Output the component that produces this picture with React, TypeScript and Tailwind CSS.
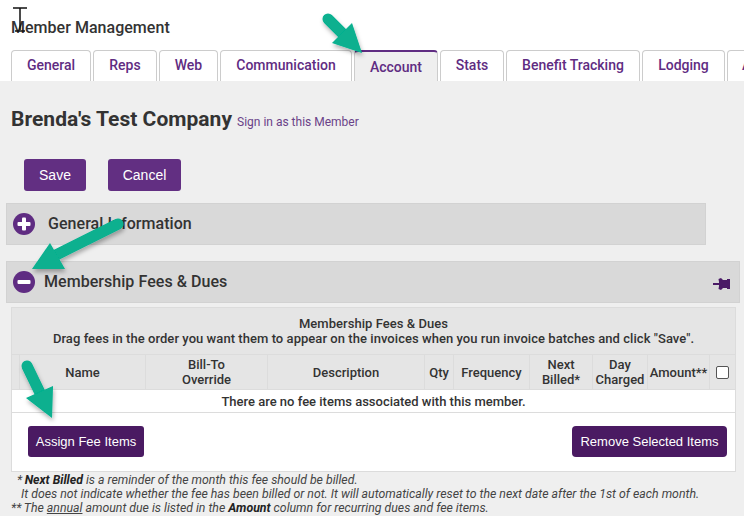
import React from "react";

const tabs = [
  { t: "General", w: "w-[80px]" },
  { t: "Reps", w: "w-[64px]" },
  { t: "Web", w: "w-[59px]" },
  { t: "Communication", w: "w-[132px]" },
  { t: "Account", w: "w-[84px]", active: true },
  { t: "Stats", w: "w-[64px]" },
  { t: "Benefit Tracking", w: "w-[134px]" },
  { t: "Lodging", w: "w-[83px]" },
];

const cols: React.ReactNode[] = [
  "",
  "Name",
  <>Bill-To<br />Override</>,
  "Description",
  "Qty",
  "Frequency",
  <>Next<br />Billed*</>,
  <>Day<br />Charged</>,
  "Amount**",
];

function Circle({ minus }: { minus?: boolean }) {
  return (
    <svg width="22" height="22" viewBox="0 0 22 22" className="shrink-0">
      <circle cx="11" cy="11" r="11" fill="#5f2c82" />
      <rect x="4.5" y="9" width="13" height="4" rx="1" fill="#fff" />
      {!minus && <rect x="9" y="4.5" width="4" height="13" rx="1" fill="#fff" />}
    </svg>
  );
}

export default function App() {
  return (
    <div className="relative w-[744px] h-[516px] overflow-hidden bg-white font-['Roboto',sans-serif]">
      <div className="h-[50px] pl-[11px] pt-[18px] text-[16px] leading-[19px] font-medium tracking-[0.03px] text-[#333]">
        Member Management
      </div>
      <div className="h-[31px] pl-[11px] flex gap-[2px] w-[800px]">
        {tabs.map((x) => (
          <div
            key={x.t}
            className={
              x.active
                ? `${x.w} shrink-0 rounded-t-[4px] border-t-2 border-x border-t-[#5f2c82] border-x-[#ccc] bg-[#efefef] text-[#5f2c82] text-[14px] font-medium text-center leading-[31px]`
                : `${x.w} shrink-0 rounded-t-[4px] border-t border-x border-[#ccc] bg-white text-[#5f2c82] text-[14px] font-medium text-center leading-[28px]`
            }
          >
            {x.t}
          </div>
        ))}
        <div className="w-[90px] shrink-0 rounded-t-[4px] border-t border-x border-[#ccc] bg-white text-[#5f2c82] text-[14px] font-medium pl-[14px] leading-[28px]">
          A
        </div>
      </div>
      <div className="h-[435px] bg-[#efefef]">
        <div className="pl-[11px] pt-[24px] h-[78px] flex items-baseline gap-[5px]">
          <span className="text-[21px] leading-[28px] font-bold tracking-[0.03px] text-[#333]">Brenda's Test Company</span>
          <span className="text-[12px] text-[#6a4288]">Sign in as this Member</span>
        </div>
        <div className="pl-[24px] flex gap-[22px] font-['Liberation_Sans',sans-serif] text-[14px] text-white">
          <div className="w-[62px] h-[32px] rounded-[3px] bg-[#622f82] flex items-center justify-center">Save</div>
          <div className="w-[73px] h-[32px] rounded-[3px] bg-[#622f82] flex items-center justify-center">Cancel</div>
        </div>
        <div className="ml-[6px] mt-[12px] w-[700px] h-[42px] bg-[#d9d9d9] border border-[#d2d2d2] flex items-center pl-[6px] gap-[13px] text-[16px] font-medium tracking-[0.05px] text-[#333]">
          <Circle />
          <span>General Information</span>
        </div>
        <div className="ml-[6px] mt-[16px] w-[734px] h-[42px] bg-[#d9d9d9] border border-[#d2d2d2] flex items-center pl-[6px] pr-[9px] gap-[9px] text-[16px] font-medium tracking-[0.05px] text-[#333]">
          <Circle minus />
          <span className="flex-1">Membership Fees &amp; Dues</span>
          <svg width="17" height="12" viewBox="0 0 17 12" className="mt-[4px]">
            <path d="M0 5 H6 V4 L5.5 1 L8 0 L10 2 H14 V1 H17 V11 H14 V10 H10 L8 12 L5.5 11 L6 8 V7 H0 Z" fill="#4a1a66" />
          </svg>
        </div>
        <div className="ml-[11px] mt-[4px] w-[725px] border border-[#dcdcdc] bg-white text-[13px] text-[#333] font-medium">
          <div className="h-[47px] bg-[#e5e5e5] border-b border-[#dcdcdc] text-center leading-[15px] pt-[8px] text-[13px] tracking-[0.05px]">
            <div>Membership Fees &amp; Dues</div>
            <div>Drag fees in the order you want them to appear on the invoices when you run invoice batches and click "Save".</div>
          </div>
          <div className="h-[34px] bg-[#e5e5e5] grid grid-cols-[8px_126px_122px_157px_29px_76px_63px_55px_62px_1fr] text-center leading-[15px] text-[13px]">
            {cols.map((c, i) => (
              <div key={i} className="flex items-center justify-center border-r border-[#dcdcdc]">
                {c}
              </div>
            ))}
            <div className="flex items-center justify-center">
              <div className="w-[13px] h-[13px] rounded-[2px] border border-[#555] bg-white" />
            </div>
          </div>
          <div className="h-[24px] border-y border-[#dcdcdc] flex items-center justify-center pt-[1px] text-[13px]">
            There are no fee items associated with this member.
          </div>
          <div className="h-[58px] flex items-start justify-between pt-[13px] pl-[16px] pr-[8px] font-['Liberation_Sans',sans-serif] font-normal text-[13px] text-white">
            <div className="w-[116px] h-[31px] rounded-[3px] bg-[#4a1a62] flex items-center justify-center">Assign Fee Items</div>
            <div className="w-[155px] h-[31px] rounded-[4px] bg-[#4a1a62] flex items-center justify-center">Remove Selected Items</div>
          </div>
        </div>
        <div className="pt-[1px] text-[12.3px] leading-[14px] italic text-[#444]">
          <div className="pl-[17px]">*&thinsp;<b className="text-[#222]">Next Billed</b> is a reminder of the month this fee should be billed.</div>
          <div className="pl-[21px]">It does not indicate whether the fee has been billed or not. It will automatically reset to the next date after the 1st of each month.</div>
          <div className="pl-[11px]">**&thinsp;The <u>annual</u> amount due is listed in the <b className="text-[#222]">Amount</b> column for recurring dues and fee items.</div>
        </div>
      </div>

      {/* Annotation arrows and text cursor over the screenshot */}
      <svg width="744" height="516" viewBox="0 0 744 516" className="absolute top-0 left-0 pointer-events-none">
        <defs>
          <filter id="s" x="-30%" y="-30%" width="160%" height="160%">
            <feDropShadow dx="1" dy="3" stdDeviation="2" floodColor="#000" floodOpacity="0.3" />
          </filter>
        </defs>
        <g filter="url(#s)" fill="#07b08f" stroke="none">
          <path d="M328 19 L346 37" stroke="#07b08f" strokeWidth="11" strokeLinecap="round" />
          <polygon points="362,53 332,43 352,23" />
          <path d="M118 224 L50 258" stroke="#07b08f" strokeWidth="11" strokeLinecap="round" />
          <polygon points="32,269 50,243 65,269" />
          <path d="M27 366 L42 397" stroke="#07b08f" strokeWidth="11" strokeLinecap="round" />
          <polygon points="52,418 26,398 53,386" />
        </g>
        <path d="M13 8 H27 M20 8 V30 M15 31 H25" stroke="#111" strokeWidth="1.5" fill="none" />
      </svg>
    </div>
  );
}
